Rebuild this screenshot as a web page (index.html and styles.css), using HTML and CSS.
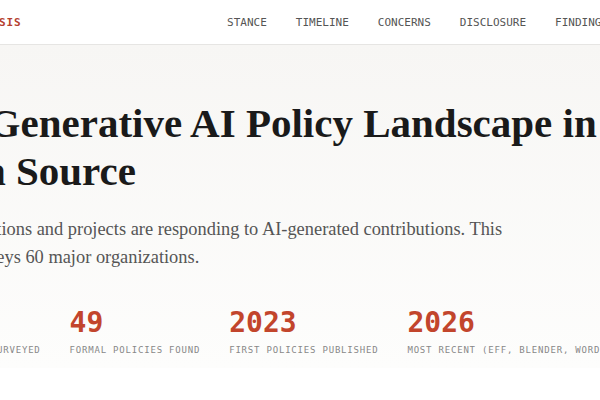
FILE: index.html
```html
<!DOCTYPE html>
<html lang="en">
<head>
<meta charset="utf-8">
<title>Generative AI Policy Landscape in Open Source</title>
<link rel="stylesheet" href="styles.css">
</head>
<body>
<header class="nav">
  <div class="nav-inner">
    <a class="logo" href="#">GEN-AI ANALYSIS</a>
    <nav class="links">
      <a href="#stance">STANCE</a>
      <a href="#timeline">TIMELINE</a>
      <a href="#concerns">CONCERNS</a>
      <a href="#disclosure">DISCLOSURE</a>
      <a href="#findings">FINDINGS</a>
      <a href="#appendix">APPENDIX</a>
    </nav>
  </div>
</header>
<section class="hero">
  <div class="hero-inner">
    <h1 class="title">The Generative AI Policy Landscape in<br>Open Source</h1>
    <p class="lede">Key foundations and projects are responding to AI-generated contributions. This review surveys 60 major organizations.</p>
    <div class="stats">
      <div class="stat"><div class="num">60</div><div class="label">OSS PROJECTS SURVEYED</div></div>
      <div class="stat"><div class="num">49</div><div class="label">FORMAL POLICIES FOUND</div></div>
      <div class="stat"><div class="num">2023</div><div class="label">FIRST POLICIES PUBLISHED</div></div>
      <div class="stat"><div class="num">2026</div><div class="label">MOST RECENT (EFF, BLENDER, WORDPRESS)</div></div>
    </div>
  </div>
</section>
</body>
</html>
```
FILE: styles.css
```css
html, body {
  margin: 0;
  padding: 0;
  overflow: hidden;
  background: #ffffff;
}
body {
  width: 600px;
  height: 400px;
}
.nav {
  height: 44px;
  border-bottom: 1px solid #e6e5e3;
  background: #ffffff;
  display: flex;
  justify-content: center;
}
.nav-inner {
  flex-shrink: 0;
  width: 780px;
  display: flex;
  align-items: center;
  font-family: "DejaVu Sans Mono", monospace;
}
.logo {
  font-size: 11px;
  font-weight: bold;
  letter-spacing: 0.8px;
  color: #b5402f;
  text-decoration: none;
}
.links {
  margin-left: auto;
  display: flex;
  gap: 29px;
}
.links a {
  font-size: 11px;
  color: #555555;
  text-decoration: none;
}
.hero {
  display: flex;
  justify-content: center;
  background: linear-gradient(180deg, #f7f6f4 0%, #fdfdfc 100%);
  padding: 54px 0 12px;
}
.hero-inner {
  flex-shrink: 0;
  width: 780px;
  display: flex;
  flex-direction: column;
}
.title {
  margin: 0;
  font-family: "Liberation Serif", serif;
  font-weight: bold;
  font-size: 41px;
  line-height: 48px;
  color: #1a1a1a;
}
.lede {
  margin: 20px 0 0;
  width: 600px;
  font-family: "Liberation Serif", serif;
  font-size: 18.4px;
  line-height: 28px;
  color: #555555;
}
.stats {
  margin-top: 35px;
  display: flex;
  gap: 29px;
}
.num {
  font-family: "DejaVu Sans Mono", monospace;
  font-weight: bold;
  font-size: 28px;
  line-height: 34px;
  color: #c2452c;
}
.label {
  margin-top: 4px;
  font-family: "DejaVu Sans Mono", monospace;
  font-size: 9px;
  line-height: 12px;
  letter-spacing: 0.8px;
  color: #888888;
  white-space: nowrap;
}
```
